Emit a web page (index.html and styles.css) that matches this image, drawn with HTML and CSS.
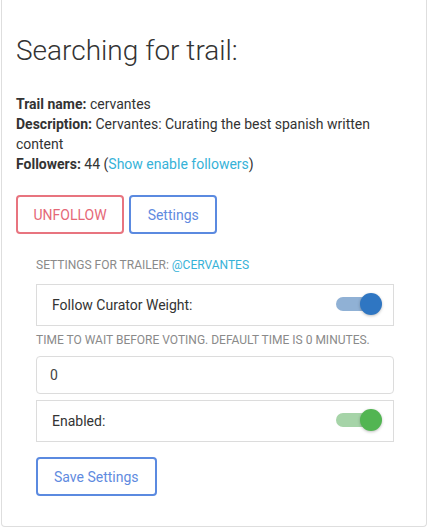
FILE: index.html
```html
<!DOCTYPE html>
<html lang="en">
<head>
    <meta charset="UTF-8">
    <meta name="viewport" content="width=device-width, initial-scale=1.0">
    <title>Trail</title>
    <link rel="stylesheet" href="styles.css">
</head>
<body>
    <div class="card">
        <h1>Searching for trail:</h1>

        <div class="trail-info">
            <div><b>Trail name:</b> cervantes</div>
            <div><b>Description:</b> Cervantes: Curating the best spanish written content</div>
            <div><b>Followers:</b> 44 (<a href="#">Show enable followers</a>)</div>
        </div>

        <div class="actions">
            <button class="btn btn-danger">UNFOLLOW</button>
            <button class="btn btn-primary">Settings</button>
        </div>

        <div class="settings">
            <div class="settings-label">Settings for trailer: <a href="#">@cervantes</a></div>

            <div class="switch-row">
                <span>Follow Curator Weight:</span>
                <span class="switch switch-blue"><span class="knob"></span></span>
            </div>

            <div class="settings-label tight">Time to wait before voting. Default time is 0 minutes.</div>
            <input type="text" class="field" value="0">

            <div class="switch-row">
                <span>Enabled:</span>
                <span class="switch switch-green"><span class="knob"></span></span>
            </div>

            <button class="btn btn-primary save">Save Settings</button>
        </div>
    </div>
</body>
</html>
```

FILE: styles.css
```css
body {
    margin: 0;
    background-color: #fff;
    color: #333;
    font-family: Roboto, "Liberation Sans", sans-serif;
    font-size: 14px;
    line-height: 20px;
}
a {
    color: #36b2d8;
    text-decoration: none;
}
.card {
    margin: 0 1px;
    height: 527px;
    box-sizing: border-box;
    padding: 34px 14px 0;
    border: 1px solid #dedede;
    border-top: none;
    border-radius: 0 0 4px 4px;
}
h1 {
    margin: 0;
    font-size: 28px;
    font-weight: 300;
    line-height: 34px;
    color: #333;
}
.trail-info {
    margin-top: 26px;
}
.trail-info b {
    font-weight: 700;
}
.actions {
    display: flex;
    gap: 5px;
    margin-top: 21px;
}
.btn {
    height: 39px;
    padding: 0 15px;
    background: #fff;
    border: 2px solid;
    border-radius: 4px;
    font-family: inherit;
    font-size: 14px;
    cursor: pointer;
}
.btn-danger {
    color: #e56877;
    border-color: #e8747f;
    padding: 0 15.5px;
}
.btn-primary {
    color: #5f8be0;
    border-color: #5b8ae0;
    padding: 0 16.5px;
}
.settings {
    padding: 0 18px 0 20px;
    margin-top: 21px;
}
.settings-label {
    font-size: 12px;
    line-height: 20px;
    color: #8a8a8a;
    text-transform: uppercase;
    margin-bottom: 9px;
}
.settings-label.tight {
    margin-bottom: 6px;
}
.switch-row {
    display: flex;
    align-items: center;
    justify-content: space-between;
    height: 42px;
    box-sizing: border-box;
    padding: 0 11px 0 15px;
    border: 1px solid #dcdcdc;
    font-size: 14px;
    color: #333;
    margin-bottom: 4px;
}
.switch {
    position: relative;
    display: block;
    width: 36px;
    height: 14px;
    margin-top: -3px;
    margin-right: 10px;
    border-radius: 7px;
}
.switch .knob {
    position: absolute;
    top: -4px;
    right: -10px;
    width: 22px;
    height: 22px;
    border-radius: 50%;
    box-shadow: 0 1px 3px rgba(0, 0, 0, 0.25);
}
.switch-blue {
    background: #90b1d5;
}
.switch-blue .knob {
    background: #2f76c2;
}
.switch-green {
    background: #a6d4a8;
}
.switch-green .knob {
    background: #52b552;
}
.field {
    display: block;
    width: 100%;
    height: 38px;
    box-sizing: border-box;
    padding: 0 13px;
    border: 1px solid #dcdcdc;
    border-radius: 4px;
    font-family: inherit;
    font-size: 14px;
    color: #444;
    margin-bottom: 6px;
}
.btn-primary.save {
    margin-top: 11px;
    padding: 0 16px;
}
```
